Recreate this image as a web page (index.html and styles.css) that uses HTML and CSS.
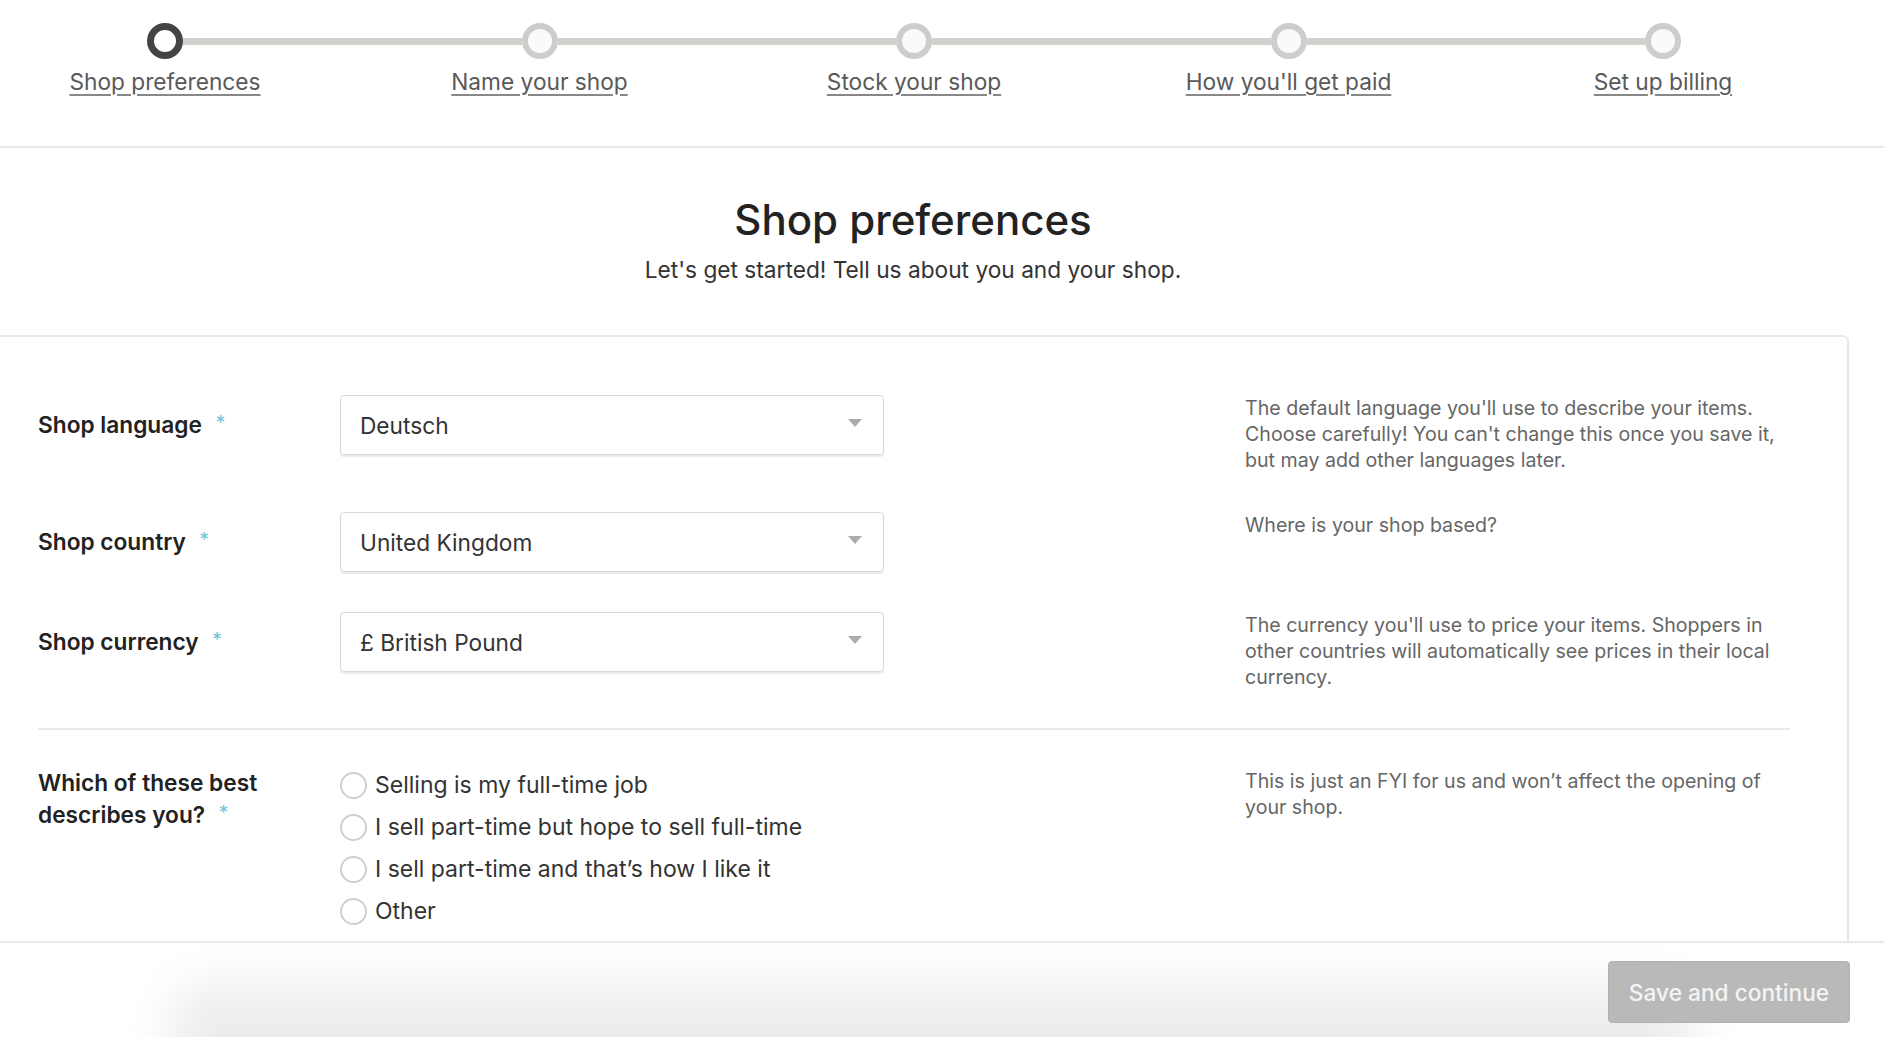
FILE: index.html
```html
<!DOCTYPE html>
<html lang="en">
<head>
<meta charset="utf-8">
<title>Shop preferences</title>
<link rel="stylesheet" href="styles.css">
</head>
<body>
<header class="stepper">
  <div class="track">
    <span class="dot dot-active"></span><span class="bar"></span>
    <span class="dot"></span><span class="bar"></span>
    <span class="dot"></span><span class="bar"></span>
    <span class="dot"></span><span class="bar"></span>
    <span class="dot"></span>
  </div>
  <nav class="steps">
    <a class="step" href="#">Shop preferences</a>
    <a class="step" href="#">Name your shop</a>
    <a class="step" href="#">Stock your shop</a>
    <a class="step" href="#">How you'll get paid</a>
    <a class="step" href="#">Set up billing</a>
  </nav>
</header>

<section class="intro">
  <h1 class="title">Shop preferences</h1>
  <p class="subtitle">Let's get started! Tell us about you and your shop.</p>
</section>

<main class="panel">
  <div class="row row-first">
    <div class="label">Shop language <span class="req">*</span></div>
    <div class="select"><span>Deutsch</span><span class="caret"></span></div>
    <p class="help">The default language you'll use to describe your items. Choose carefully! You can't change this once you save it, but may add other languages later.</p>
  </div>
  <div class="row">
    <div class="label">Shop country <span class="req">*</span></div>
    <div class="select"><span>United Kingdom</span><span class="caret"></span></div>
    <p class="help">Where is your shop based?</p>
  </div>
  <div class="row">
    <div class="label">Shop currency <span class="req">*</span></div>
    <div class="select"><span>£ British Pound</span><span class="caret"></span></div>
    <p class="help">The currency you'll use to price your items. Shoppers in other countries will automatically see prices in their local currency.</p>
  </div>
  <hr class="divider">
  <div class="row row-radio">
    <div class="label label-multi">Which of these best describes you? <span class="req">*</span></div>
    <div class="radios">
      <label class="radio"><span class="circle"></span>Selling is my full-time job</label>
      <label class="radio"><span class="circle"></span>I sell part-time but hope to sell full-time</label>
      <label class="radio"><span class="circle"></span>I sell part-time and that’s how I like it</label>
      <label class="radio"><span class="circle"></span>Other</label>
    </div>
    <p class="help help-radio">This is just an FYI for us and won’t affect the opening of your shop.</p>
  </div>
</main>

<footer class="footer">
  <div class="shade"></div>
  <button class="save" type="button">Save and continue</button>
</footer>
</body>
</html>
```

FILE: styles.css
```css
* { box-sizing: border-box; }
html, body { margin: 0; padding: 0; }
body {
  width: 1884px;
  height: 1037px;
  overflow: hidden;
  background: #fff;
  color: #222;
  font-family: Inter, Roboto, "Liberation Sans", sans-serif;
}

/* stepper */
.stepper {
  height: 148px;
  border-bottom: 2px solid #e9e9e9;
  padding-top: 23px;
}
.track {
  display: flex;
  align-items: center;
  padding-left: 147px;
}
.dot {
  width: 36px;
  height: 36px;
  border-radius: 50%;
  border: 6px solid #cdcdcb;
  background: #fafafa;
  flex: none;
}
.dot-active { border: 7px solid #444; background: #fff; }
.bar {
  flex: none;
  width: 338.5px;
  height: 7px;
  background: #d0d0cc;
}
.steps {
  display: grid;
  grid-template-columns: repeat(5, 330px);
  column-gap: 44.5px;
  margin-top: 9px;
}
.step {
  text-align: center;
  font-size: 22.7px;
  line-height: 28px;
  color: #595959;
  text-decoration: underline;
  text-decoration-color: #888;
  text-underline-offset: 4px;
}

/* intro */
.intro {
  text-align: center;
  padding: 47px 0 50px;
  margin-left: -58px;
}
.title {
  margin: 0;
  font-size: 42px;
  line-height: 50px;
  font-weight: 500;
  color: #222;
}
.subtitle {
  margin: 10px 0 0;
  font-size: 22.7px;
  line-height: 30px;
  color: #333;
}

/* panel */
.panel {
  width: 1849px;
  height: 606px;
  border-top: 2px solid #e9e9e9;
  border-right: 2px solid #e9e9e9;
  border-top-right-radius: 6px;
  padding: 58px 59px 0 38px;
}
.row {
  display: grid;
  grid-template-columns: 302px 544px 1fr;
}
.row-first { margin-top: 0; }
.row + .row { margin-top: 40px; }
.row-first + .row { margin-top: 39px; }
.label {
  font-size: 22.7px;
  line-height: 30px;
  font-weight: 600;
  padding-top: 15px;
  color: #222;
}
.req {
  color: #6ec2da;
  font-size: 19px;
  line-height: 1;
  font-weight: 400;
  vertical-align: 4px;
  margin-left: 8px;
}
.select {
  height: 60px;
  border: 1.5px solid #d8d8d8;
  border-radius: 4px;
  box-shadow: 0 2px 1px rgba(0,0,0,0.08);
  display: flex;
  align-items: center;
  justify-content: space-between;
  padding: 0 21px 0 19px;
  font-size: 22.7px;
  color: #333;
}
.caret {
  width: 0;
  height: 0;
  border-left: 7px solid transparent;
  border-right: 7px solid transparent;
  border-top: 8px solid #acacac;
  margin-top: -4px;
}
.help {
  margin: 0 0 0 361px;
  font-size: 19.6px;
  line-height: 26px;
  color: #666;
}
.divider {
  border: 0;
  border-top: 2px solid #e9e9e9;
  margin: 38px 0 0;
  width: 1752px;
}
.row.row-radio { margin-top: 34px; }
.label-multi {
  padding-top: 3px;
  line-height: 32px;
  padding-right: 80px;
}
.radios { display: flex; flex-direction: column; }
.radio {
  display: flex;
  align-items: center;
  height: 42px;
  font-size: 23px;
  color: #333;
}
.circle {
  width: 27px;
  height: 27px;
  border-radius: 50%;
  border: 2px solid #cfcfcf;
  margin-right: 8px;
  flex: none;
}
.help-radio { padding-top: 4px; }

/* footer */
.footer {
  position: relative;
  height: 96px;
  border-top: 2px solid #e9e9e9;
  display: flex;
  justify-content: flex-end;
  padding: 18px 34px 0 0;
  overflow: hidden;
}
.shade {
  position: absolute;
  left: 170px;
  right: 190px;
  top: 40px;
  height: 120px;
  background: rgba(0,0,0,0.07);
  filter: blur(22px);
  border-radius: 40px;
}
.save {
  position: relative;
  width: 242px;
  height: 62px;
  border: 1px solid #b0b0b0;
  border-radius: 4px;
  background: #b9b9b9;
  color: #f4f4f4;
  font-family: inherit;
  font-size: 22.7px;
  font-weight: 500;
}
```
